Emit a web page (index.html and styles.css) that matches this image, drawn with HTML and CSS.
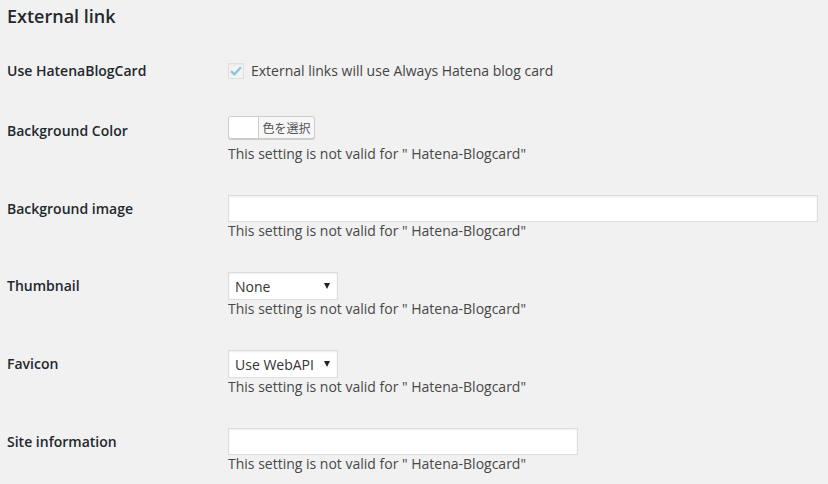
FILE: index.html
```html
<!DOCTYPE html>
<html lang="en">
<head>
<meta charset="utf-8">
<title>External link</title>
<link rel="stylesheet" href="styles.css">
</head>
<body>
<div class="wrap">
  <h2 class="title">External link</h2>
  <div class="form-table">
    <div class="row row-check">
      <div class="th">Use HatenaBlogCard</div>
      <div class="td">
        <label class="check-label">
          <span class="checkbox" aria-hidden="true">
            <svg width="12" height="10" viewBox="0 0 12 10"><path d="M1 5.2 L4.3 8.3 L11 1.3" fill="none" stroke="#8cc4dd" stroke-width="2.3" stroke-linejoin="miter"/></svg>
          </span>
          External links will use Always Hatena blog card
        </label>
      </div>
    </div>
    <div class="row row-color">
      <div class="th">Background Color</div>
      <div class="td">
        <button class="color-btn" type="button"><span class="swatch"></span><span class="color-text">色を選択</span></button>
        <p class="description">This setting is not valid for " Hatena-Blogcard"</p>
      </div>
    </div>
    <div class="row">
      <div class="th">Background image</div>
      <div class="td">
        <input class="text-input wide" type="text">
        <p class="description">This setting is not valid for " Hatena-Blogcard"</p>
      </div>
    </div>
    <div class="row">
      <div class="th">Thumbnail</div>
      <div class="td">
        <span class="select"><select><option>None</option></select></span>
        <p class="description">This setting is not valid for " Hatena-Blogcard"</p>
      </div>
    </div>
    <div class="row">
      <div class="th">Favicon</div>
      <div class="td">
        <span class="select"><select><option>Use WebAPI</option></select></span>
        <p class="description">This setting is not valid for " Hatena-Blogcard"</p>
      </div>
    </div>
    <div class="row">
      <div class="th">Site information</div>
      <div class="td">
        <input class="text-input regular" type="text">
        <p class="description">This setting is not valid for " Hatena-Blogcard"</p>
      </div>
    </div>
  </div>
</div>
</body>
</html>
```

FILE: styles.css
```css
* { box-sizing: border-box; }
html, body { margin: 0; padding: 0; background: #f1f1f1; }
body {
  font-family: "Open Sans", "Noto Sans", "Noto Sans CJK JP", sans-serif;
  font-size: 14px;
  color: #444;
}
.wrap { padding: 0 10px 0 7px; }
.title {
  margin: 0 0 14px;
  padding-top: 4px;
  font-size: 18px;
  line-height: 24px;
  font-weight: 600;
  color: #23282d;
}
.row {
  display: grid;
  grid-template-columns: 221px 1fr;
}
.th {
  padding-top: 20px;
  line-height: 18px;
  font-weight: 600;
  color: #23282d;
}
.td {
  padding: 15px 0 17px;
  line-height: 18px;
}
.row-check .td { padding: 20px 0 22px; }
.row-color .td { padding-top: 14px; }
.check-label {
  display: flex;
  align-items: center;
  gap: 7px;
  height: 18px;
  color: #444;
}
.checkbox {
  width: 16px;
  height: 16px;
  border: 1px solid #e0e0e0;
  background: #f3f3f3;
  display: flex;
  align-items: center;
  justify-content: center;
  box-shadow: inset 0 1px 2px rgba(0,0,0,.04);
}
.description {
  margin: 0;
  line-height: 18px;
  color: #484848;
}
.color-btn {
  display: flex;
  height: 23px;
  width: 87px;
  padding: 0;
  margin: 0 0 6px;
  border: 1px solid #ccc;
  border-radius: 3px;
  background: #f7f7f7;
  box-shadow: 0 1px 0 #ccc;
  overflow: hidden;
  font-family: inherit;
}
.swatch {
  width: 30px;
  height: 100%;
  background: #fff;
  border-right: 1px solid #ccc;
}
.color-text {
  flex: 1;
  font-size: 12px;
  line-height: 21px;
  color: #555;
  text-align: center;
  font-family: "Noto Sans CJK JP", sans-serif;
}
.text-input {
  display: block;
  height: 27px;
  border: 1px solid #ddd;
  background: #fff;
  box-shadow: inset 0 1px 2px rgba(0,0,0,.07);
  margin: 0;
  padding: 3px 5px;
  font-family: inherit;
  font-size: 14px;
  outline: none;
}
.text-input.wide { width: 100%; }
.text-input.regular { width: 350px; }
.select {
  position: relative;
  display: block;
  width: 110px;
  height: 28px;
}
.select select {
  -webkit-appearance: none;
  appearance: none;
  width: 100%;
  height: 28px;
  margin: 0;
  padding: 0 20px 0 6px;
  border: 1px solid #ddd;
  border-radius: 0;
  background: #fff;
  box-shadow: inset 0 1px 2px rgba(0,0,0,.07);
  font-family: inherit;
  font-size: 14px;
  color: #333;
  outline: none;
}
.select::after {
  content: "";
  position: absolute;
  right: 8px;
  top: 11px;
  border-left: 3px solid transparent;
  border-right: 3px solid transparent;
  border-top: 6px solid #222;
  pointer-events: none;
}
```
